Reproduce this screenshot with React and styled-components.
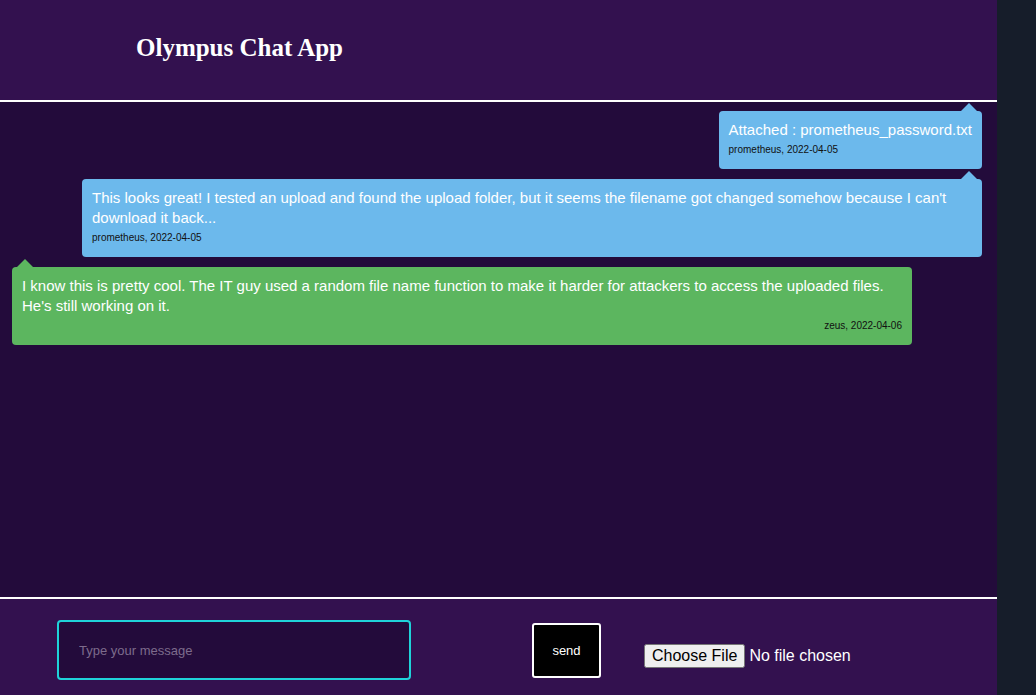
import React from 'react';
import styled, { createGlobalStyle } from 'styled-components';

const GlobalStyle = createGlobalStyle`
    html, body {
        margin: 0;
        padding: 0;
        height: 100%;
        overflow: hidden;
        font-family: "Liberation Sans", Arial, sans-serif;
    }
    #root {
        height: 100%;
    }
`

const Page = styled.div`
    display: flex;
    height: 100vh;
    background: #161d2a;
`

const ChatWindow = styled.div`
    display: flex;
    flex-direction: column;
    width: 997px;
    height: 100%;
`

const Header = styled.header`
    display: flex;
    align-items: center;
    height: 102px;
    padding-left: 136px;
    background: #33114f;
    border-bottom: 2px solid #ffffff;
    box-sizing: border-box;
`

const Title = styled.h1`
    margin: 0;
    font-family: "Liberation Serif", "Times New Roman", serif;
    font-size: 25px;
    font-weight: bold;
    color: #ffffff;
    padding-bottom: 4px;
`

const Messages = styled.div`
    flex: 1;
    display: flex;
    flex-direction: column;
    gap: 10px;
    padding: 9px 15px 10px 12px;
    background: #230b3b;
    border-bottom: 2px solid #ffffff;
    overflow: hidden;
`

const Bubble = styled.div`
    position: relative;
    align-self: ${({ mine }) => (mine ? 'flex-end' : 'flex-start')};
    max-width: 880px;
    padding: 10px 10px 10px;
    border-radius: 4px;
    background: ${({ mine }) => (mine ? '#6cb9ec' : '#5cb65f')};
    color: #ffffff;

    &::before {
        content: '';
        position: absolute;
        top: -8px;
        ${({ mine }) => (mine ? 'right: 5px;' : 'left: 5px;')}
        border-left: 8px solid transparent;
        border-right: 8px solid transparent;
        border-bottom: 8px solid ${({ mine }) => (mine ? '#6cb9ec' : '#5cb65f')};
    }
`

const BubbleText = styled.div`
    font-size: 15px;
    line-height: 20px;
    margin-top: -1px;
`

const Meta = styled.div`
    font-size: 10px;
    line-height: 19px;
    color: #111111;
    text-align: ${({ mine }) => (mine ? 'left' : 'right')};
`

const Footer = styled.footer`
    display: flex;
    align-items: center;
    height: 96px;
    padding-left: 57px;
    background: #33114f;
    box-sizing: border-box;
`

const MessageInput = styled.input`
    width: 354px;
    height: 60px;
    box-sizing: border-box;
    margin-top: 6px;
    padding: 0 20px;
    background: #230b3b;
    border: 2px solid #1fd3d9;
    border-radius: 4px;
    color: #ffffff;
    font-family: "Liberation Sans", Arial, sans-serif;
    font-size: 13px;
    outline: none;

    &::placeholder {
        color: #7d6b8c;
    }
`

const SendButton = styled.button`
    width: 69px;
    height: 55px;
    margin-left: 121px;
    margin-top: 7px;
    background: #000000;
    border: 2px solid #ffffff;
    border-radius: 3px;
    color: #ffffff;
    font-family: "Liberation Sans", Arial, sans-serif;
    font-size: 13px;
    cursor: pointer;
`

const FileInput = styled.input`
    margin-left: 43px;
    margin-top: 18px;
    color: #ffffff;
    font-family: "Liberation Sans", Arial, sans-serif;
    font-size: 16px;
`

const Strip = styled.div`
    flex: 1;
    background: #161d2a;
`

const messages = [
    {
        id: 1,
        mine: true,
        text: 'Attached : prometheus_password.txt',
        meta: 'prometheus, 2022-04-05',
    },
    {
        id: 2,
        mine: true,
        text: "This looks great! I tested an upload and found the upload folder, but it seems the filename got changed somehow because I can't download it back...",
        meta: 'prometheus, 2022-04-05',
    },
    {
        id: 3,
        mine: false,
        text: "I know this is pretty cool. The IT guy used a random file name function to make it harder for attackers to access the uploaded files. He's still working on it.",
        meta: 'zeus, 2022-04-06',
    },
]

const App = () => {
    return (
        <Page>
            <GlobalStyle />
            <ChatWindow>
                <Header>
                    <Title>Olympus Chat App</Title>
                </Header>
                <Messages>
                    {
                        messages.map((msg) => (
                            <Bubble key={msg.id} mine={msg.mine}>
                                <BubbleText>{msg.text}</BubbleText>
                                <Meta mine={msg.mine}>{msg.meta}</Meta>
                            </Bubble>
                        ))
                    }
                </Messages>
                <Footer>
                    <MessageInput type="text" placeholder="Type your message" />
                    <SendButton>send</SendButton>
                    <FileInput type="file" />
                </Footer>
            </ChatWindow>
            <Strip />
        </Page>
    )
}

export default App;
